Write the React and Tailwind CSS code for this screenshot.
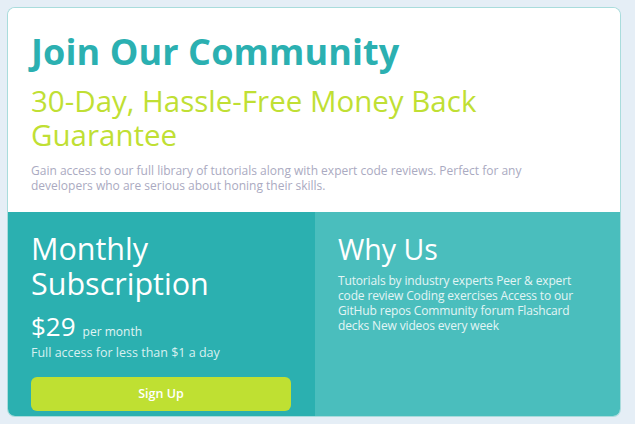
import React from "react";

export default function App() {
  const font = { fontFamily: '"Open Sans", "Noto Sans", sans-serif' };
  return (
    <div className="min-h-screen w-full bg-[#e5eef6] pt-[8px] pl-[8px]" style={font}>
      <div className="w-[612px] h-[408px] rounded-[7px] overflow-hidden bg-white shadow-[0_0_0_1px_#a9dcdc] flex flex-col">
        <div className="h-[204px] bg-white px-[23px] pt-[22px]">
          <h1 className="text-[36px] leading-[44px] font-bold text-[#2bb0b1] tracking-[0.1px]">Join Our Community</h1>
          <h2 className="mt-[10px] max-w-[520px] text-[29.5px] leading-[34px] text-[#c0df34]">30-Day, Hassle-Free Money Back Guarantee</h2>
          <p className="mt-[11px] text-[12px] leading-[15px] text-[#aaaac1] pr-[60px]">
            Gain access to our full library of tutorials along with expert code reviews. Perfect for any developers who are serious about honing their skills.
          </p>
        </div>
        <div className="flex flex-1">
          <div className="w-[307px] bg-[#2bb0b0] px-[23px] pt-[19px] text-white">
            <h3 className="text-[30.5px] leading-[35px]">Monthly Subscription</h3>
            <div className="mt-[10px] flex items-baseline gap-[7px]">
              <span className="text-[26px] leading-[30px]">$29</span>
              <span className="text-[12px] text-[#e0f4f4]">per month</span>
            </div>
            <p className="mt-[4px] text-[12.5px] leading-[15px] text-[#d8f0f0]">Full access for less than $1 a day</p>
            <button className="mt-[17px] w-[260px] h-[34px] rounded-[6px] bg-[#bfe032] text-[12.5px] font-semibold text-white">Sign Up</button>
          </div>
          <div className="flex-1 bg-[#4abebd] px-[23px] pt-[20px] text-white">
            <h3 className="text-[28.5px] leading-[35px]">Why Us</h3>
            <p className="mt-[6px] text-[12px] leading-[15px] text-[#e3f5f5] pr-[8px] tracking-[-0.15px]">
              Tutorials by industry experts Peer &amp; expert code review Coding exercises Access to our GitHub repos Community forum Flashcard decks New videos every week
            </p>
          </div>
        </div>
      </div>
    </div>
  );
}
